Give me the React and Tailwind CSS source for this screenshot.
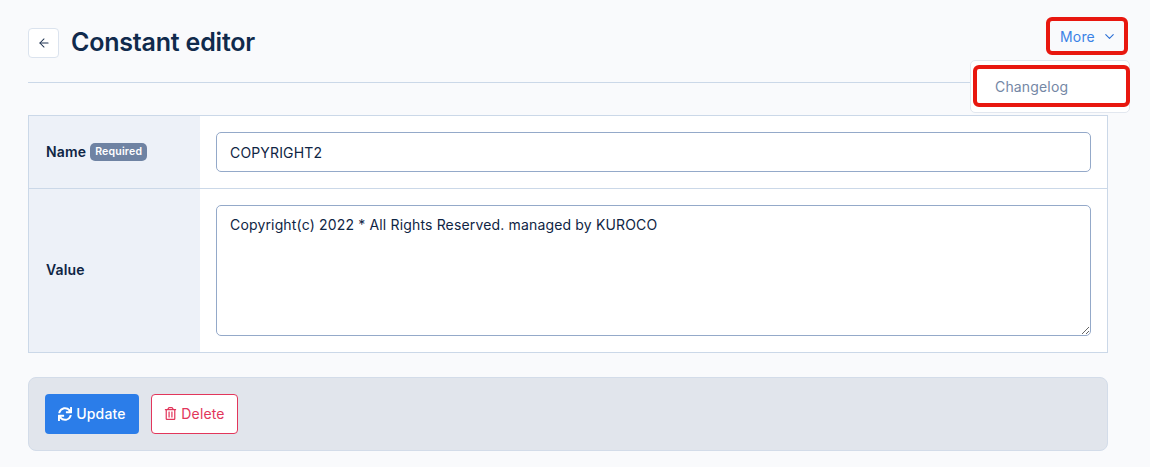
import React from 'react';
import { ArrowLeft, ChevronDown } from 'lucide-react';
import { FaSync, FaRegTrashAlt } from 'react-icons/fa';

export default function App() {
  return (
    <div className="h-[467px] w-[1150px] overflow-hidden bg-[#f9fafc] pl-[28px] pr-[42px] text-[14px] tracking-[0.16px] text-[#0f2544] font-['Inter','Liberation_Sans',sans-serif]">
      {/* Header */}
      <div className="relative flex h-[83px] items-start border-b border-[#cbd8e8] pt-[28px]">
        <button className="flex h-[30px] w-[31px] items-center justify-center rounded-[4px] border border-[#dbe3ee] bg-white text-[#1f3350]">
          <ArrowLeft size={14} strokeWidth={1.75} />
        </button>
        <h1 className="ml-[12px] text-[25px] leading-[28px] font-semibold tracking-[-0.2px] text-[#102a4c]">Constant editor</h1>

        <div className="absolute right-[-20px] top-[17px] flex h-[38px] w-[82px] items-center justify-center gap-[7px] rounded-[6px] border-[4px] border-[#e8170f] pl-[3px] text-[14px] text-[#3b82e6]">
          <span>More</span>
          <ChevronDown size={15} strokeWidth={1.75} className="text-[#2b6fd6]" />
        </div>

        {/* Dropdown */}
        <div className="absolute right-[-22px] top-[60px] z-10 h-[53px] w-[160px] rounded-[5px] border border-[#e2e7ef] bg-white">
          <div className="ml-[2px] mt-[4px] flex h-[42px] w-[157px] items-center rounded-[6px] border-[4px] border-[#e8170f] bg-white pl-[18px] text-[14px] text-[#7487a5]">
            Changelog
          </div>
        </div>
      </div>

      {/* Form table */}
      <div className="mt-[32px] w-[1080px] border border-[#cbd8e8] bg-white">
        <div className="flex h-[73px] border-b border-[#cbd8e8]">
          <div className="flex w-[171px] items-center gap-[4px] bg-[#edf1f8] pb-[1px] pl-[17px] font-semibold">
            <span>Name</span>
            <span className="rounded-[5px] bg-[#6f83a3] px-[5px] py-[2px] text-[10.5px] leading-[14px] font-semibold tracking-[0.2px] text-white">Required</span>
          </div>
          <div className="flex-1 pl-[16px] pr-[16px] pt-[16px]">
            <input
              readOnly
              value="COPYRIGHT2"
              className="h-[40px] w-full rounded-[5px] border border-[#94a9c9] bg-white px-[13px] text-[14px] text-[#0f2544] outline-none"
            />
          </div>
        </div>
        <div className="flex h-[163px]">
          <div className="flex w-[171px] items-center bg-[#edf1f8] pb-[3px] pl-[17px] font-semibold">Value</div>
          <div className="flex-1 pl-[16px] pr-[16px] pt-[16px]">
            <textarea
              readOnly
              value="Copyright(c) 2022 * All Rights Reserved. managed by KUROCO"
              className="block h-[131px] w-full rounded-[5px] border border-[#94a9c9] bg-white px-[13px] py-[9px] text-[14px] leading-[20px] text-[#0f2544] outline-none"
            />
          </div>
        </div>
      </div>

      {/* Actions */}
      <div className="mt-[24px] flex h-[74px] w-[1080px] items-center gap-[12px] rounded-[8px] border border-[#d3dce9] bg-[#e1e5ec] pl-[16px]">
        <button className="flex h-[40px] w-[94px] items-center justify-center gap-[4px] rounded-[4px] bg-[#2b7de9] pb-[1px] text-[14px] font-medium text-white">
          <FaSync size={14} />
          <span>Update</span>
        </button>
        <button className="flex h-[40px] w-[87px] items-center justify-center gap-[4px] rounded-[4px] border border-[#e2365b] bg-white pb-[1px] text-[14px] text-[#e2365b]">
          <FaRegTrashAlt size={13} />
          <span>Delete</span>
        </button>
      </div>
    </div>
  );
}
